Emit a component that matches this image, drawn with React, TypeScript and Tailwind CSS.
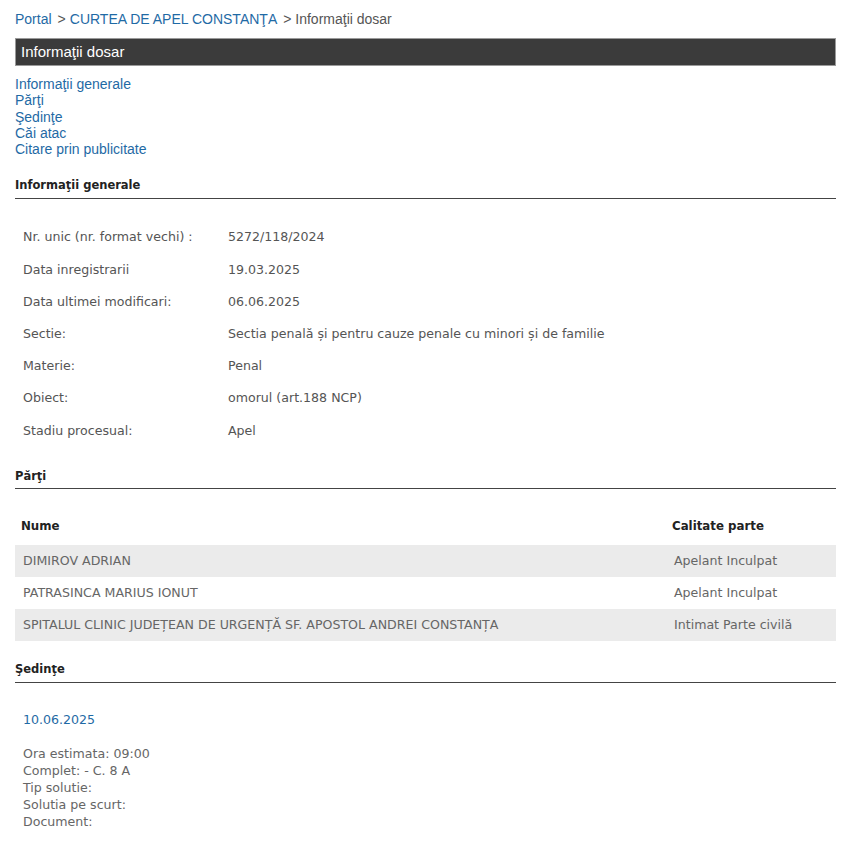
import React from "react";

const tah = { fontFamily: '"DejaVu Sans", Verdana, sans-serif' };

const info: [string, string][] = [
  ["Nr. unic (nr. format vechi) :", "5272/118/2024"],
  ["Data inregistrarii", "19.03.2025"],
  ["Data ultimei modificari:", "06.06.2025"],
  ["Sectie:", "Sectia penală și pentru cauze penale cu minori și de familie"],
  ["Materie:", "Penal"],
  ["Obiect:", "omorul (art.188 NCP)"],
  ["Stadiu procesual:", "Apel"],
];

const parti: [string, string][] = [
  ["DIMIROV ADRIAN", "Apelant Inculpat"],
  ["PATRASINCA MARIUS IONUT", "Apelant Inculpat"],
  ["SPITALUL CLINIC JUDEȚEAN DE URGENȚĂ SF. APOSTOL ANDREI CONSTANȚA", "Intimat Parte civilă"],
];

function Heading({ children }: { children: React.ReactNode }) {
  return (
    <div className="border-b border-[#444] pb-[3px] text-[11.5px] font-bold text-[#222]" style={tah}>
      {children}
    </div>
  );
}

export default function App() {
  return (
    <div className="min-h-[842px] w-[855px] bg-white pl-[15px] pr-[19px] pt-[10px] pb-4 font-['Liberation_Sans',Arial,sans-serif]">
      <div className="text-[14px] leading-[18px] text-[#555]">
        <span className="text-[#1f6aa5]">Portal</span>
        <span className="ml-[6px]">&gt;</span>
        <span className="ml-[4px] text-[#1f6aa5]">CURTEA DE APEL CONSTANŢA</span>
        <span className="ml-[6px]">&gt; Informaţii dosar</span>
      </div>
      <div className="mt-[10px] h-[28px] border border-[#9a9a9a] bg-[#3b3b3b] pl-[5px] text-[15px] leading-[26px] text-white">
        Informaţii dosar
      </div>
      <div className="mt-[10px] flex flex-col text-[14px] leading-[16.3px] text-[#1f6aa5]">
        <span>Informaţii generale</span>
        <span>Părţi</span>
        <span>Şedinţe</span>
        <span>Căi atac</span>
        <span>Citare prin publicitate</span>
      </div>

      <div className="mt-[20px]">
        <Heading>Informaţii generale</Heading>
      </div>
      <div className="mt-[23px] flex flex-col text-[12.6px] text-[#555]" style={tah}>
        {info.map(([k, v]) => (
          <div key={k} className="flex h-[32.2px] items-center pl-[8px]">
            <div className="w-[205px]">{k}</div>
            <div>{v}</div>
          </div>
        ))}
      </div>

      <div className="mt-[21px]">
        <Heading>Părţi</Heading>
      </div>
      <div className="mt-[22px] text-[12.6px]" style={tah}>
        <div className="flex h-[32px] items-center text-[11.8px] font-bold text-[#222]">
          <div className="flex-1 pl-[6px]">Nume</div>
          <div className="w-[164px]">Calitate parte</div>
        </div>
        <div className="mt-[2px]">
          {parti.map(([n, c], i) => (
            <div
              key={n}
              className={`flex h-[32px] items-center text-[#666] ${i % 2 === 0 ? "bg-[#ebebeb]" : "bg-white"}`}
            >
              <div className="flex-1 pl-[8px]">{n}</div>
              <div className="w-[164px] pl-[2px]">{c}</div>
            </div>
          ))}
        </div>
      </div>

      <div className="mt-[20px]">
        <Heading>Şedinţe</Heading>
      </div>
      <div className="mt-[28px] pl-[8px] text-[12.6px]" style={tah}>
        <div className="text-[#1f6aa5]">10.06.2025</div>
        <div className="mt-[16px] flex flex-col leading-[17px] text-[#666]">
          <span>Ora estimata: 09:00</span>
          <span>Complet: - C. 8 A</span>
          <span>Tip solutie:</span>
          <span>Solutia pe scurt:</span>
          <span>Document:</span>
        </div>
      </div>
    </div>
  );
}
